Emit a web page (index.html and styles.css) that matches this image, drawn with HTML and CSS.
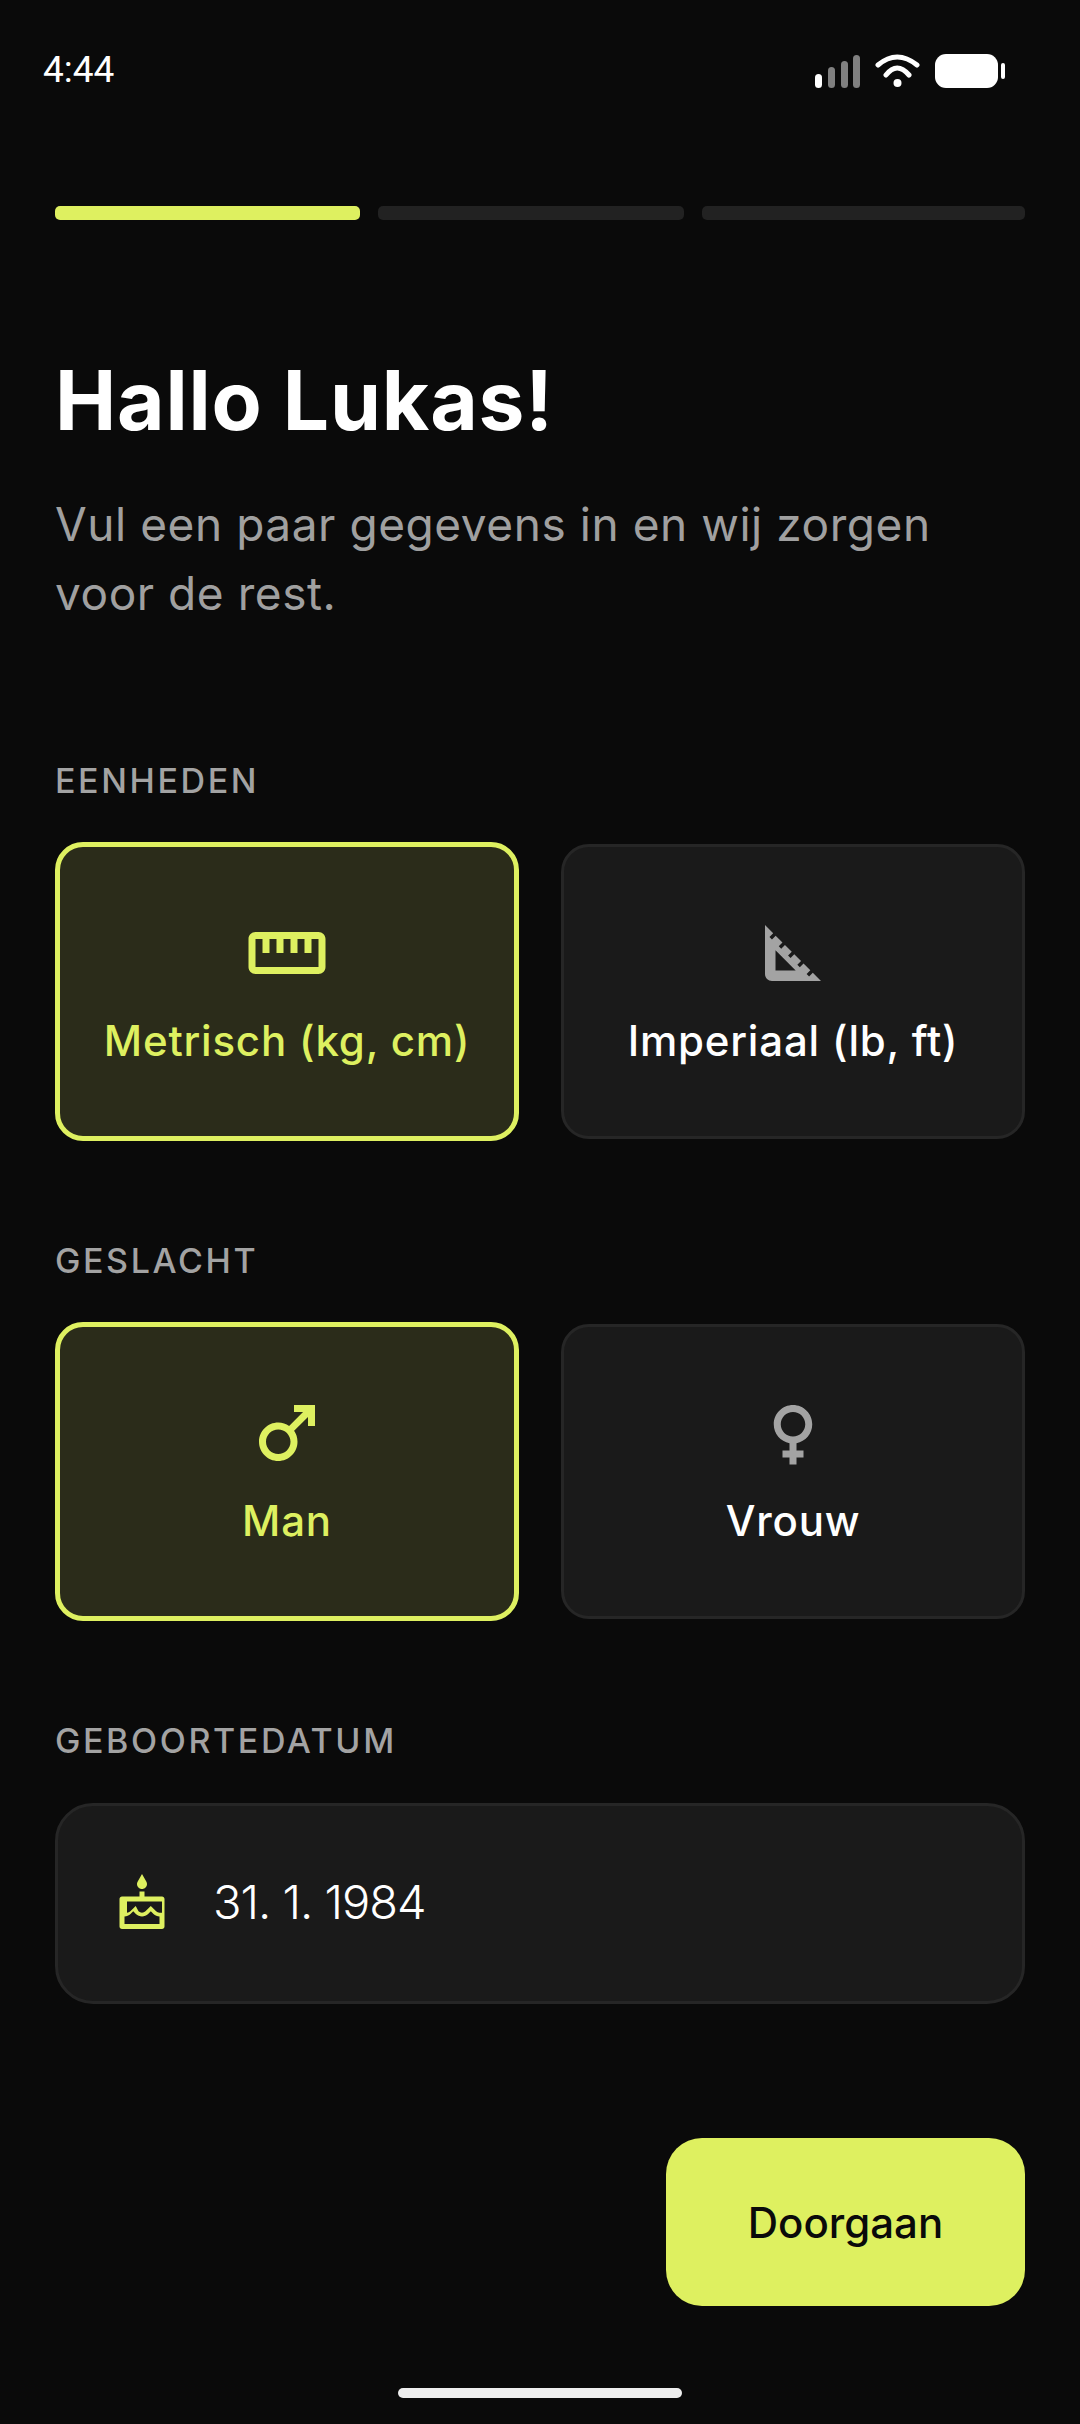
FILE: index.html
```html
<!DOCTYPE html>
<html lang="nl">
<head>
    <meta charset="UTF-8">
    <title>Hallo Lukas</title>
    <link rel="stylesheet" href="styles.css">
</head>
<body>
    <div class="status-bar">
        <span class="time">4:44</span>
        <svg class="status-icons" width="190" height="36" viewBox="0 0 190 36">
            <rect x="0" y="20" width="7" height="14" rx="3.5" fill="#fff"/>
            <rect x="13" y="13" width="7" height="21" rx="3.5" fill="#808080"/>
            <rect x="26" y="7" width="7" height="27" rx="3.5" fill="#808080"/>
            <rect x="38" y="1" width="7" height="33" rx="3.5" fill="#808080"/>
            <path d="M63 11Q82 -5 102 11M71 21Q82 7 94 21" fill="none" stroke="#fff" stroke-width="5" stroke-linecap="round"/>
            <circle cx="82.500" cy="29" r="4" fill="#fff"/>
            <rect x="120" y="0" width="63" height="34" rx="11" fill="#fff"/>
            <rect x="186" y="9" width="4" height="16" rx="2" fill="#fff"/>
        </svg>
    </div>

    <main class="content">
        <div class="progress">
            <div class="progress-step active"></div>
            <div class="progress-step"></div>
            <div class="progress-step"></div>
        </div>

        <h1>Hallo Lukas!</h1>
        <p class="intro">Vul een paar gegevens in en wij zorgen voor de rest.</p>

        <h2 class="section-label">EENHEDEN</h2>
        <div class="options">
            <div class="option selected">
                <svg class="option-icon" viewBox="0 0 24 24"><path d="M21 6H3c-1.100 0-2 .9-2 2v8c0 1.100.9 2 2 2h18c1.100 0 2-.9 2-2V8c0-1.100-.9-2-2-2zm0 10H3V8h2v4h2V8h2v4h2V8h2v4h2V8h2v4h2V8h2v8z"/></svg>
                <span class="option-label">Metrisch (kg, cm)</span>
            </div>
            <div class="option">
                <svg class="option-icon" viewBox="0 0 24 24"><path d="M17.660 17.660l-1.060 1.060-.71-.71 1.060-1.060-1.940-1.940-1.060 1.060-.71-.71 1.060-1.060-1.940-1.940-1.060 1.060-.71-.71 1.060-1.060L9.700 9.700l-1.060 1.060-.71-.71 1.060-1.060-1.940-1.940-1.060 1.060-.71-.71 1.060-1.060L4 4v14c0 1.100.9 2 2 2h14l-2.340-2.340zM7 17v-5.760L12.760 17H7z"/></svg>
                <span class="option-label">Imperiaal (lb, ft)</span>
            </div>
        </div>

        <h2 class="section-label">GESLACHT</h2>
        <div class="options">
            <div class="option selected">
                <svg class="option-icon" viewBox="0 0 24 24"><path d="M9.500 11c1.930 0 3.500 1.570 3.500 3.500S11.430 18 9.500 18 6 16.430 6 14.500 7.570 11 9.500 11zm0-2C6.460 9 4 11.460 4 14.500S6.460 20 9.500 20s5.500-2.460 5.500-5.500c0-1.160-.36-2.230-.97-3.120L18 7.420V10h2V4h-6v2h2.580l-3.970 3.970C11.730 9.360 10.660 9 9.500 9z"/></svg>
                <span class="option-label">Man</span>
            </div>
            <div class="option">
                <svg class="option-icon" viewBox="0 0 24 24"><path d="M17.500 9.500C17.500 6.460 15.040 4 12 4S6.500 6.460 6.500 9.500c0 2.700 1.940 4.940 4.500 5.410V17H9v2h2v2h2v-2h2v-2h-2v-2.090c2.560-.47 4.500-2.710 4.500-5.410zm-9 0C8.500 7.570 10.070 6 12 6s3.500 1.570 3.500 3.500S13.930 13 12 13s-3.500-1.570-3.500-3.500z"/></svg>
                <span class="option-label">Vrouw</span>
            </div>
        </div>

        <h2 class="section-label">GEBOORTEDATUM</h2>
        <div class="date-field">
            <svg class="date-icon" viewBox="0 0 24 24"><path d="M12 6c1.110 0 2-.9 2-2 0-.38-.1-.73-.29-1.030L12 0l-1.710 2.970c-.19.3-.29.65-.29 1.030 0 1.100.9 2 2 2zm6 3h-5V7h-2v2H4c-.55 0-1 .45-1 1v11c0 .55.45 1 1 1h16c.55 0 1-.45 1-1V10c0-.55-.45-1-1-1h-2zm1 11H5v-3c.9-.01 1.760-.37 2.400-1.010l1.090-1.070 1.070 1.070c1.310 1.310 3.590 1.300 4.890 0l1.080-1.070 1.070 1.070c.64.64 1.500 1 2.400 1.010v3zm0-4.500c-.51-.01-.99-.2-1.350-.57l-2.130-2.130-2.140 2.130c-.74.74-2.030.74-2.770 0L9.480 12.800l-2.140 2.130c-.35.36-.83.56-1.340.57V11h14v4.500z"/></svg>
            <span class="date-value">31. 1. 1984</span>
        </div>

        <div class="actions">
            <button class="continue" type="button">Doorgaan</button>
        </div>
    </main>

    <div class="home-indicator"></div>
</body>
</html>
```

FILE: styles.css
```css
* {
    box-sizing: border-box;
}

html,
body {
    margin: 0;
    height: 2424px;
}

body {
    font-family: Inter, "Noto Sans", sans-serif;
    background-color: #0a0a0a;
    color: #fff;
    overflow: hidden;
}

.status-bar {
    display: flex;
    justify-content: space-between;
    align-items: flex-start;
    height: 206px;
    padding: 50px 75px 0 43px;
}

.time {
    font-family: Roboto, sans-serif;
    font-size: 37px;
    line-height: 40px;
    color: #fff;
}

.status-icons {
    margin-top: 4px;
}

.content {
    padding: 0 55px;
}

.progress {
    display: grid;
    grid-template-columns: 305px 306px 1fr;
    column-gap: 18px;
}

.progress-step {
    height: 14px;
    border-radius: 5px;
    background-color: #222;
}

.progress-step.active {
    background-color: #def060;
}

h1 {
    margin: 0;
    padding-top: 135px;
    font-size: 82px;
    line-height: 92px;
    font-weight: 700;
    letter-spacing: 0.8px;
    color: #fff;
}

.intro {
    max-width: 900px;
    margin: 43px 0 0;
    font-size: 46px;
    line-height: 69px;
    font-weight: 400;
    letter-spacing: 0.55px;
    color: #a0a0a0;
}

.section-label {
    margin: 0;
    padding-top: 131px;
    font-size: 34px;
    line-height: 44px;
    font-weight: 500;
    letter-spacing: 2.600px;
    color: #a3a3a3;
}

.options {
    display: grid;
    grid-template-columns: 1fr 1fr;
    column-gap: 42px;
    align-items: center;
    margin-top: 39px;
}

.options + .section-label {
    padding-top: 98px;
}

.option {
    display: flex;
    flex-direction: column;
    align-items: center;
    padding: 64px 0 67px;
    border: 3px solid #262626;
    border-radius: 28px;
    background-color: #1a1a1a;
}

.option-icon {
    width: 84px;
    height: 84px;
    fill: #a3a3a3;
}

.option-label {
    margin-top: 18px;
    font-size: 42px;
    line-height: 56px;
    font-weight: 500;
    letter-spacing: 0.8px;
    color: #fff;
}

.option.selected {
    border: 5px solid #def060;
    background-color: #2b2c1a;
}

.option.selected .option-icon {
    fill: #def060;
}

.option.selected .option-label {
    color: #def060;
}

.date-field {
    display: flex;
    align-items: center;
    gap: 42px;
    height: 201px;
    margin-top: 40px;
    padding-left: 54px;
    border: 3px solid #262626;
    border-radius: 38px;
    background-color: #1a1a1a;
}

.date-icon {
    width: 60px;
    height: 60px;
    fill: #def060;
}

.date-value {
    padding-bottom: 5px;
    margin-left: -1px;
    font-size: 47px;
    font-weight: 300;
    letter-spacing: -1px;
    color: #fff;
}

.actions {
    display: flex;
    justify-content: flex-end;
    margin-top: 134px;
}

.continue {
    width: 359px;
    height: 168px;
    border: none;
    border-radius: 36px;
    background-color: #def060;
    color: #0a0a0a;
    font-family: inherit;
    font-size: 42px;
    font-weight: 500;
}

.home-indicator {
    width: 284px;
    height: 10px;
    margin: 82px auto 0;
    border-radius: 5px;
    background-color: #eee;
}
```
